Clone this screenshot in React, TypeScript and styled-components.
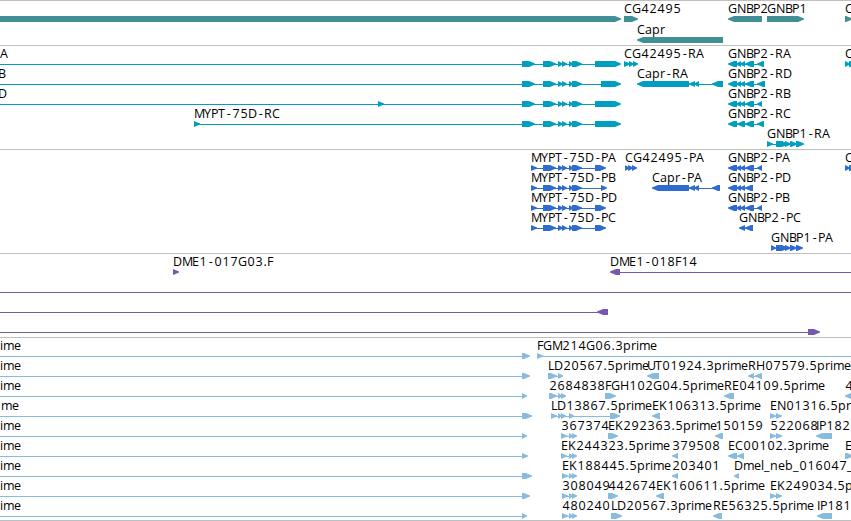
import React from 'react';
import styled, { createGlobalStyle } from 'styled-components';

type Dir = 'r' | 'l';

type Feature = {
  // [x, text]
  label?: [number, string];
  dir?: Dir;
  // [start, end] of the thin connecting line
  line?: [number, number];
  // [start, end] of every exon block
  exons?: [number, number][];
};

type TrackData = {
  name: string;
  color: string;
  laneHeight: number;
  padBottom: number;
  lanes: Feature[][];
};

const WIDTH = 851;

// whole-pixel advances used to space the label characters
const ADVANCES: Record<string, number> = {
  A: 8, B: 7, C: 8, D: 9, E: 7, F: 6, G: 9, H: 9, I: 3, K: 8, L: 6, M: 10, N: 9,
  P: 7, R: 8, T: 7, U: 8, Y: 7, '-': 7, '.': 4, _: 6,
  a: 7, b: 8, e: 7, i: 3, l: 3, m: 11, n: 8, p: 8, r: 5,
};

// narrow glyphs that sit in the middle of their advance
const BEARINGS: Record<string, number> = { '-': 1.7, '.': 0.5 };

const glyphPositions = (x: number, text: string) => {
  let pen = x;
  return text
    .split('')
    .map((c) => {
      const at = pen + (BEARINGS[c] || (/\d/.test(c) ? 0.4 : 0));
      pen += ADVANCES[c] || 8;
      return at;
    })
    .join(' ');
};

const f = (
  x: number,
  text: string,
  dir: Dir = 'r',
  exons: [number, number][] = [],
  line?: [number, number]
): Feature => ({ label: [x, text], dir, exons, line });

const MYPT_MID: [number, number][] = [
  [543, 556], [558, 563], [562, 567], [569, 573], [572, 582],
];
const GNBP2_HEAD: [number, number][] = [
  [728, 737], [736, 741], [740, 745], [745, 754],
];
const TRIO: [number, number][] = [[569, 573], [572, 577]];
const PAIR: [number, number][] = [[770, 776], [776, 782]];
const EDGE: [number, number][] = [[845, 850], [849, 856]];

const est = (end: number, text = 'ime', x = 0) =>
  f(x, text, 'r', [[522, end]], [0, end - 2]);

const TRACKS: TrackData[] = [
  {
    name: 'genes',
    color: '#408f94',
    laneHeight: 21,
    padBottom: 0,
    lanes: [
      [
        { dir: 'r', exons: [[-10, 621]] },
        f(624, 'CG42495', 'r', [[624, 638]]),
        f(728, 'GNBP2', 'l', [[728, 762]]),
        f(767, 'GNBP1', 'r', [[767, 804]]),
        f(845, 'C', 'r', [[845, 852]]),
      ],
      [f(637, 'Capr', 'l', [[637, 723]])],
    ],
  },
  {
    name: 'transcripts',
    color: '#009ebf',
    laneHeight: 20,
    padBottom: 1,
    lanes: [
      [
        f(0, 'A', 'r', [[522, 535], ...MYPT_MID, [595, 621]], [0, 618]),
        f(624, 'CG42495-RA', 'r', [[624, 630], [629, 634], [633, 638]], [624, 636]),
        f(728, 'GNBP2-RA', 'l', [...GNBP2_HEAD, [757, 764]], [730, 764]),
        f(845, 'C', 'r', EDGE),
      ],
      [
        f(-2, 'B', 'r', [[522, 535], ...MYPT_MID, [601, 621]], [0, 618]),
        f(637, 'Capr-RA', 'l', [[637, 689], [689, 695], [694, 699], [712, 723]], [640, 723]),
        f(728, 'GNBP2-RD', 'l', [...GNBP2_HEAD, [757, 765]], [730, 765]),
      ],
      [
        f(-2, 'D', 'r', [[378, 384], [522, 535], ...MYPT_MID, [595, 621]], [0, 618]),
        f(728, 'GNBP2-RB', 'l', [...GNBP2_HEAD, [757, 762]], [730, 762]),
      ],
      [
        f(194, 'MYPT-75D-RC', 'r', [[194, 200], [522, 535], ...MYPT_MID, [595, 621]], [194, 618]),
        f(728, 'GNBP2-RC', 'l', [[728, 737], [737, 745], [745, 754], [757, 764]], [730, 764]),
      ],
      [
        f(767, 'GNBP1-RA', 'r', [[767, 773], [776, 788], [785, 791], [790, 797], [796, 804]], [767, 802]),
      ],
    ],
  },
  {
    name: 'proteins',
    color: '#306ccf',
    laneHeight: 20,
    padBottom: 1,
    lanes: [
      [
        f(531, 'MYPT-75D-PA', 'r', [[531, 537], ...MYPT_MID, [595, 606]], [531, 604]),
        f(625, 'CG42495-PA', 'r', [[625, 629], [628, 633], [632, 637]], [625, 635]),
        f(728, 'GNBP2-PA', 'l', [...GNBP2_HEAD, [757, 762]], [730, 762]),
        f(845, 'C', 'r', EDGE),
      ],
      [
        f(531, 'MYPT-75D-PB', 'r', [[531, 537], ...MYPT_MID, [601, 607]], [531, 604]),
        f(652, 'Capr-PA', 'l', [[652, 689], [689, 695], [694, 699], [712, 720]], [655, 720]),
        f(728, 'GNBP2-PD', 'l', GNBP2_HEAD.slice(0, 3).concat([[745, 753]]), [730, 753]),
      ],
      [
        f(531, 'MYPT-75D-PD', 'r', [[531, 537], ...MYPT_MID, [595, 606]], [531, 604]),
        f(728, 'GNBP2-PB', 'l', [...GNBP2_HEAD, [757, 762]], [730, 762]),
      ],
      [
        f(531, 'MYPT-75D-PC', 'r', [[531, 537], ...MYPT_MID, [595, 606]], [531, 604]),
        f(739, 'GNBP2-PC', 'l', [[739, 745], [745, 753]], [741, 753]),
      ],
      [
        f(771, 'GNBP1-PA', 'r', [[771, 776], [776, 788], [785, 791], [790, 797], [796, 803]], [771, 801]),
      ],
    ],
  },
  {
    name: 'clones',
    color: '#7759ab',
    laneHeight: 20,
    padBottom: 1,
    lanes: [
      [
        f(173, 'DME1-017G03.F', 'r', [[173, 179]]),
        f(610, 'DME1-018F14', 'l', [[610, 620]], [612, 851]),
      ],
      [{ line: [0, 851] }],
      [{ dir: 'l', line: [0, 608], exons: [[597, 608]] }],
      [{ dir: 'r', line: [0, 818], exons: [[808, 820]] }],
    ],
  },
  {
    name: 'ests',
    color: '#87bcde',
    laneHeight: 20,
    padBottom: 0,
    lanes: [
      [est(530), f(537, 'FGM214G06.3prime', 'r', [[537, 543]], [537, 851])],
      [
        est(530),
        f(548, 'LD20567.5prime', 'r', [[548, 557], [558, 563]], [548, 561]),
        f(647, 'UT01924.3prime', 'l', [[647, 659]]),
        f(748, 'RH07579.5prime', 'l', [[748, 754], [755, 762]], [750, 762]),
      ],
      [
        est(527),
        f(549, '2684838', 'r', [[549, 557], [558, 562], [561, 566]], [549, 564]),
        f(605, 'FGH102G04.5prime', 'r', [[605, 616]]),
        f(724, 'RE04109.5prime', 'l', [[724, 734]]),
        f(845, '4', 'l', [[845, 853]]),
      ],
      [
        est(532, 'me', 1),
        f(551, 'LD13867.5prime', 'r', [[551, 557], [558, 562], [561, 566], [569, 574], [610, 620]], [551, 618]),
        f(652, 'EK106313.5prime', 'l', [[652, 660]]),
        f(770, 'EN01316.5prime', 'r', PAIR, [770, 780]),
      ],
      [
        est(527),
        f(561, '367374', 'r', [[561, 567], ...TRIO], [561, 575]),
        f(608, 'EK292363.5prime', 'r', [[608, 618]]),
        f(715, '150159', 'l', [[715, 723]]),
        f(770, '522068', 'r', PAIR, [770, 780]),
        f(816, 'IP182', 'l', [[816, 832]]),
      ],
      [
        est(528),
        f(561, 'EK244323.5prime', 'r', [[561, 567], ...TRIO], [561, 575]),
        f(672, '379508', 'l', [[672, 678]]),
        f(728, 'EC00102.3prime', 'l', [[728, 737], [737, 744]], [730, 744]),
        f(845, 'E', 'r', [[845, 853]]),
      ],
      [
        est(532),
        f(562, 'EK188445.5prime', 'r', [[562, 568], ...TRIO], [562, 575]),
        f(672, '203401', 'l', [[672, 678]]),
        f(734, 'Dmel_neb_016047_', 'l', [[734, 739]]),
      ],
      [
        est(530),
        f(562, '308049', 'r', [[562, 568], ...TRIO], [562, 575]),
        f(608, '442674', 'r', [[608, 618]]),
        f(656, 'EK160611.5prime', 'l', [[656, 664]]),
        f(770, 'EK249034.5prime', 'r', PAIR, [770, 780]),
      ],
      [
        est(527),
        f(562, '480240', 'r', [[562, 568], ...TRIO], [562, 575]),
        f(611, 'LD20567.3prime', 'r', [[611, 622]]),
        f(713, 'RE56325.5prime', 'l', [[713, 722]]),
        f(817, 'IP181', 'l', [[817, 832]]),
      ],
    ],
  },
];

const exonPoints = ([a, b]: [number, number], dir: Dir) => {
  const tip = Math.min(b - a, 6);
  return dir === 'r'
    ? `${a},13 ${b - tip},13 ${b},15.5 ${b},16.5 ${b - tip},19 ${a},19`
    : `${b},13 ${a + tip},13 ${a},15.5 ${a},16.5 ${a + tip},19 ${b},19`;
};

const Lane = ({ features, height }: { features: Feature[]; height: number }) => (
  <LaneSvg width={WIDTH} height={height} viewBox={`0 0 ${WIDTH} ${height}`}>
    {features.map(({ label, line, exons = [], dir = 'r' }, i) => (
      <g key={i}>
        {!!line && <rect x={line[0]} y={16} width={line[1] - line[0]} height={1} />}
        {exons.map((exon, n) => (
          <polygon key={n} points={exonPoints(exon, dir)} />
        ))}
        {!!label && (
          <Label x={glyphPositions(label[0], label[1])} y={10}>
            {label[1]}
          </Label>
        )}
      </g>
    ))}
  </LaneSvg>
);

export default function App() {
  return (
    <>
      <GlobalStyle />
      <Browser>
        {TRACKS.map((track) => (
          <Track key={track.name} $color={track.color} $padBottom={track.padBottom}>
            {track.lanes.map((features, i) => (
              <Lane key={i} features={features} height={track.laneHeight} />
            ))}
          </Track>
        ))}
      </Browser>
    </>
  );
}

const GlobalStyle = createGlobalStyle`
  body {
    margin: 0;
    background: #fff;
    overflow: hidden;
  }
`;

const Browser = styled.main`
  display: flex;
  flex-direction: column;
  box-sizing: border-box;
  width: ${WIDTH}px;
  height: 521px;
  overflow: hidden;
  border-bottom: 1px solid #bfbfbf;
`;

const Track = styled.section<{ $color: string; $padBottom: number }>`
  display: flex;
  flex-direction: column;
  flex-shrink: 0;
  padding: 2px 0 ${(props) => props.$padBottom}px;
  border-top: 1px solid #bfbfbf;
  color: ${(props) => props.$color};
`;

const LaneSvg = styled.svg`
  display: block;
  flex-shrink: 0;
  fill: currentColor;
  overflow: visible;
`;

const Label = styled.text`
  fill: #000;
  font-family: 'Open Sans', 'Noto Sans', sans-serif;
  font-size: 12.5px;
  font-weight: 400;
`;
